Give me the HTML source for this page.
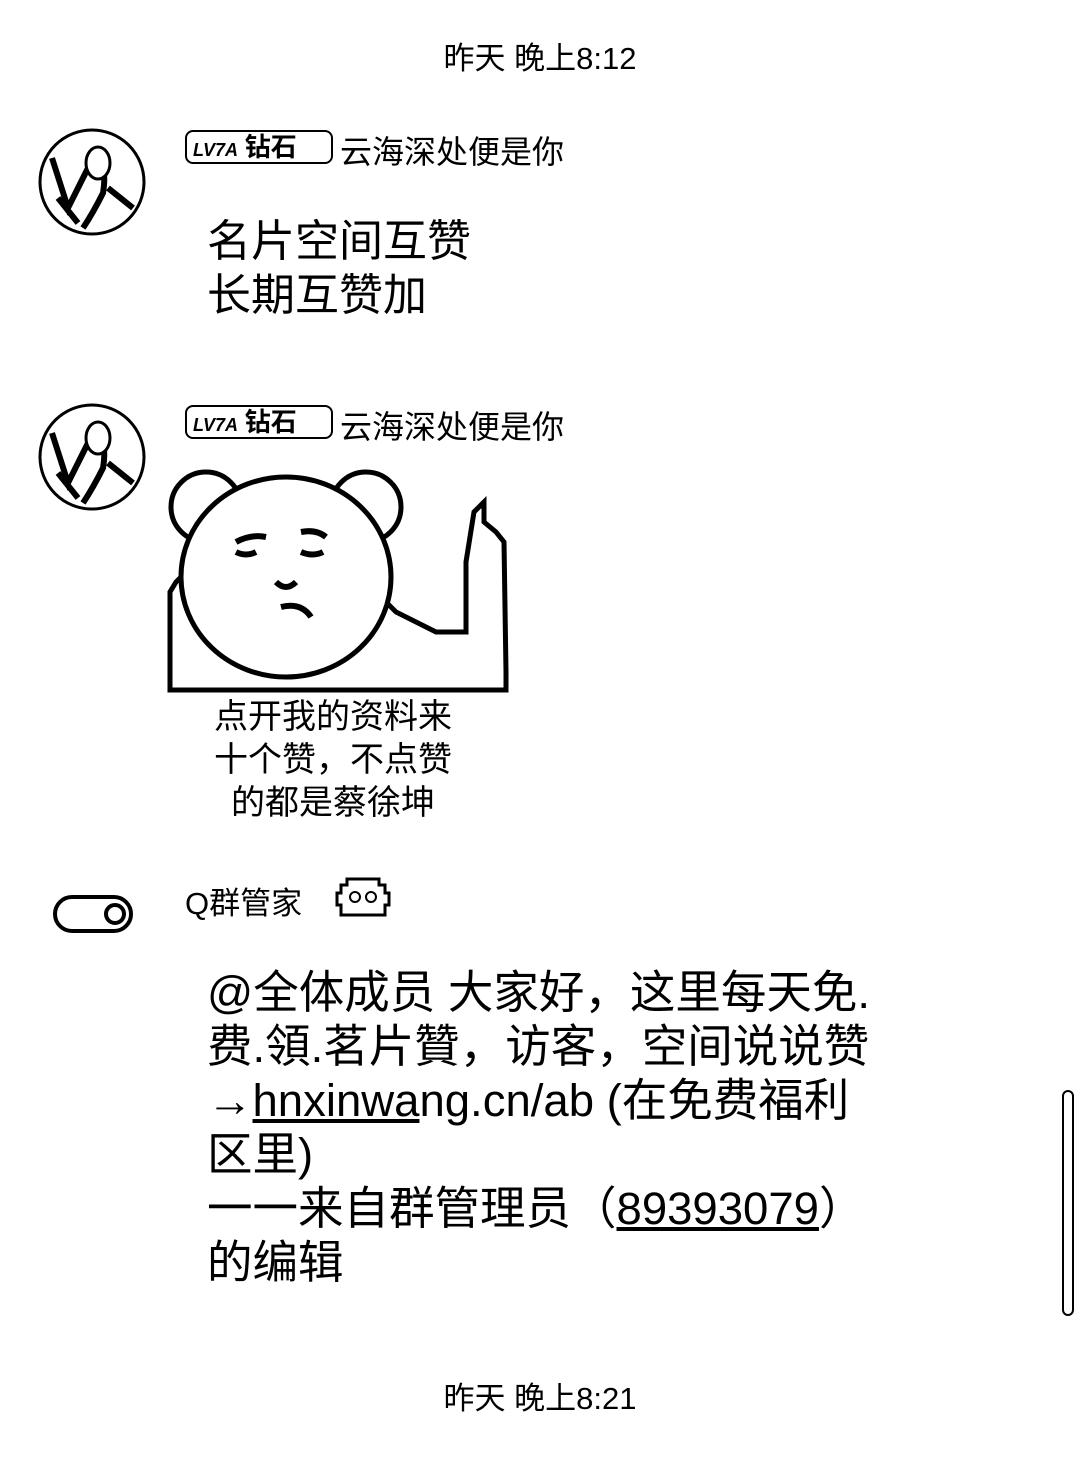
<!DOCTYPE html>
<html><head><meta charset="utf-8"><style>
body{margin:0;width:1080px;height:1459px;background:#fff;position:relative;overflow:hidden;font-family:"Liberation Sans","Noto Sans CJK SC",sans-serif;color:#000}
.a{position:absolute;white-space:nowrap}
.ts{left:0;width:1080px;text-align:center;font-size:31px}
.nm{font-size:32px}
.msg{font-size:44px;line-height:54px}
.badge{position:absolute;border:2px solid #000;border-radius:8px;height:30px;font-size:24px;line-height:30px}
</style></head><body>
<div class="a ts" style="top:33px">昨天 晚上8:12</div>

<svg class="a" style="left:38px;top:128px" width="108" height="108"><circle cx="54" cy="54" r="52" fill="#fff" stroke="#000" stroke-width="3"/><path d="M14 30 L30 80 L50 40 M55 25 q15 10 10 40 q-10 20 -20 35 M70 60 l25 20 M20 70 l20 25" stroke="#000" stroke-width="6" fill="none"/><ellipse cx="60" cy="35" rx="12" ry="16" fill="#fff" stroke="#000" stroke-width="3"/></svg>
<div class="badge" style="left:185px;top:130px;width:144px"><b style="margin-left:6px;font-style:italic;font-size:18px">LV7A</b> <b style="font-size:26px">钻石</b></div>
<div class="a nm" style="left:340px;top:127px">云海深处便是你</div>
<div class="a msg" style="left:207px;top:215px">名片空间互赞<br>长期互赞加</div>

<svg class="a" style="left:38px;top:403px" width="108" height="108"><circle cx="54" cy="54" r="52" fill="#fff" stroke="#000" stroke-width="3"/><path d="M14 30 L30 80 L50 40 M55 25 q15 10 10 40 q-10 20 -20 35 M70 60 l25 20 M20 70 l20 25" stroke="#000" stroke-width="6" fill="none"/><ellipse cx="60" cy="35" rx="12" ry="16" fill="#fff" stroke="#000" stroke-width="3"/></svg>
<div class="badge" style="left:185px;top:405px;width:144px"><b style="margin-left:6px;font-style:italic;font-size:18px">LV7A</b> <b style="font-size:26px">钻石</b></div>
<div class="a nm" style="left:340px;top:402px">云海深处便是你</div>

<svg class="a" style="left:166px;top:462px" width="346" height="232">
<path d="M4 130 L4 228 L340 228 L340 210 L338 80 L330 70 L318 60 L318 40 L308 50 L300 100 L300 170 L270 170 L230 150 L200 120 L200 90 L40 90 L10 120 Z" fill="#fff" stroke="#000" stroke-width="5"/>
<circle cx="40" cy="45" r="35" fill="#fff" stroke="#000" stroke-width="5"/>
<circle cx="200" cy="45" r="35" fill="#fff" stroke="#000" stroke-width="5"/>
<ellipse cx="120" cy="115" rx="105" ry="100" fill="#fff" stroke="#000" stroke-width="5"/>
<path d="M70 80 q15 -8 30 -5 M135 70 q15 -3 25 5 M70 90 q10 5 20 0 M135 90 q12 5 22 0 M110 120 q10 10 20 0 M115 145 q20 -5 30 10" stroke="#000" stroke-width="6" fill="none"/>
</svg>
<div class="a" style="left:198px;top:696px;font-size:34px;line-height:43px;text-align:center;width:270px">点开我的资料来<br>十个赞，不点赞<br>的都是蔡徐坤</div>

<svg class="a" style="left:53px;top:895px" width="80" height="40"><rect x="2" y="2" width="76" height="34" rx="17" fill="#fff" stroke="#000" stroke-width="4"/><circle cx="62" cy="19" r="9" fill="none" stroke="#000" stroke-width="4"/></svg>
<div class="a" style="left:185px;top:878px;font-size:31px">Q群管家</div>
<svg class="a" style="left:333px;top:875px" width="60" height="44"><path d="M14 4 h32 v6 h6 v8 h4 v12 h-4 v10 h-44 v-10 h-4 v-12 h4 v-8 h6 z" fill="#fff" stroke="#000" stroke-width="3"/><circle cx="22" cy="22" r="5" fill="none" stroke="#000" stroke-width="2"/><circle cx="38" cy="22" r="5" fill="none" stroke="#000" stroke-width="2"/></svg>

<div class="a msg" style="left:207px;top:966px;font-size:45.5px">@全体成员 大家好，这里每天免.<br>费.領.茗片贊，访客，空间说说赞<br>→<u>hnxinwa</u>ng.cn/ab (在免费福利<br>区里)<br>一一来自群管理员（<u>89393079</u>）<br>的编辑</div>

<div class="a" style="left:1062px;top:1090px;width:8px;height:222px;border:2px solid #000;border-radius:6px"></div>
<div class="a ts" style="top:1373px">昨天 晚上8:21</div>
</body></html>
